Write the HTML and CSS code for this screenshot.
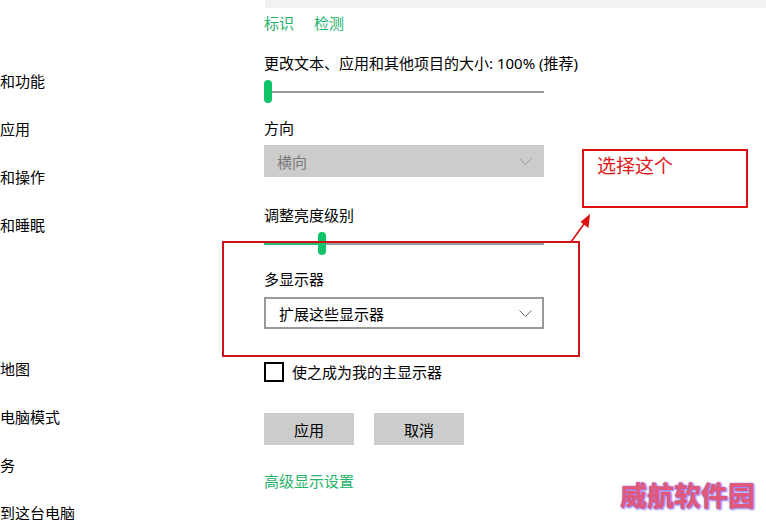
FILE: index.html
```html
<!DOCTYPE html>
<html lang="zh-CN">
<head>
  <meta charset="UTF-8" />
  <title>显示设置</title>
  <meta name="viewport" content="width=device-width, initial-scale=1.0" />
  <link rel="stylesheet" href="styles.css">
</head>
<body>
  <div class="page">
    <ul class="nav">
      <li></li>
      <li>和功能</li>
      <li>应用</li>
      <li>和操作</li>
      <li>和睡眠</li>
      <li></li>
      <li></li>
      <li>地图</li>
      <li>电脑模式</li>
      <li>务</li>
      <li>到这台电脑</li>
    </ul>

    <div class="main">
      <div class="preview"></div>
      <div class="links">
        <a>标识</a>
        <a>检测</a>
      </div>

      <div class="label first">更改文本、应用和其他项目的大小: 100% (推荐)</div>
      <div class="slider">
        <div class="thumb"></div>
        <div class="track"></div>
      </div>

      <div class="label orient">方向</div>
      <div class="select disabled">
        <span>横向</span>
        <svg width="13" height="7" viewBox="0 0 13 7"><polyline points="0.5,0.5 6.5,6.5 12.5,0.5" fill="none" stroke="#9a9a9a" stroke-width="1"/></svg>
      </div>

      <div class="label bright">调整亮度级别</div>
      <div class="slider">
        <div class="track filled"></div>
        <div class="thumb"></div>
        <div class="track"></div>
      </div>

      <div class="label multi">多显示器</div>
      <div class="select">
        <span>扩展这些显示器</span>
        <svg width="13" height="7" viewBox="0 0 13 7"><polyline points="0.5,0.5 6.5,6.5 12.5,0.5" fill="none" stroke="#666" stroke-width="1"/></svg>
      </div>

      <label class="check">
        <span class="box"></span>
        <span>使之成为我的主显示器</span>
      </label>

      <div class="buttons">
        <button>应用</button>
        <button>取消</button>
      </div>

      <a class="advanced">高级显示设置</a>
    </div>
  </div>

  <!-- annotations drawn over the screenshot -->
  <div class="mark mark-select"></div>
  <div class="mark mark-note">选择这个</div>
  <svg class="arrow" width="30" height="34" viewBox="0 0 30 34">
    <line x1="2" y1="31" x2="15" y2="13" stroke="#e01010" stroke-width="1.6"/>
    <polygon points="21,3 19.5,17 11.5,11" fill="#e01010"/>
  </svg>
  <div class="watermark">威航软件园</div>
</body>
</html>
```

FILE: styles.css
```css
html, body { margin: 0; height: 520px; overflow: hidden; background: #fff; }
body { font-family: "Noto Sans", "Noto Sans CJK SC", sans-serif; font-size: 15px; color: #000; }

.page { display: flex; height: 520px; }

.nav { flex: 0 0 264px; list-style: none; margin: 0; padding: 9px 0 0; white-space: nowrap; }
.nav li { height: 48px; line-height: 48px; }

.main { flex: 1; display: flex; flex-direction: column; align-items: flex-start; }
.preview { align-self: stretch; height: 8px; margin-left: 1px; background: #f2f2f2; }

.links { display: flex; gap: 20px; margin-top: 5px; line-height: 20px; }
.links a, .advanced { color: #1fb36b; }

.label { line-height: 20px; }
.label.first { margin-top: 20px; }
.label.orient { margin-top: 15px; }
.label.bright { margin-top: 28px; }
.label.multi { margin-top: 14px; }

.slider { display: flex; align-items: center; width: 280px; height: 23px; margin-top: 7px; }
.slider .track { flex: 1; height: 2px; background: #999; }
.slider .thumb { width: 8px; height: 23px; border-radius: 4px; background: #10c46a; }
.slider .track.filled { flex: 0 0 54px; background: #2bb673; }

.select {
  box-sizing: border-box; width: 280px; height: 32px; margin-top: 7px;
  display: flex; align-items: center; justify-content: space-between;
  padding: 0 10px 0 13px; border: 2px solid #999; background: #fff;
}
.select.disabled { border: none; padding-right: 12px; background: #ccc; color: #7a7a7a; }
.label.multi + .select { margin-top: 8px; }

.check { display: flex; align-items: center; gap: 8px; margin-top: 33px; line-height: 20px; }
.check .box { box-sizing: border-box; width: 20px; height: 20px; border: 2px solid #000; }

.buttons { display: flex; gap: 20px; margin-top: 31px; }
.buttons button {
  width: 90px; height: 32px; border: none; background: #ccc; color: #000;
  font-family: inherit; font-size: 15px; padding: 0;
}

.advanced { margin-top: 26px; line-height: 20px; }

.mark { position: absolute; box-sizing: border-box; border: 2px solid #cc1418; }
.mark-select { left: 222px; top: 241px; width: 358px; height: 116px; }
.mark-note {
  left: 582px; top: 149px; width: 166px; height: 59px; border-color: #e01010;
  padding: 2px 0 0 13px; color: #e01818; font-size: 19px; line-height: 26px;
}
.arrow { position: absolute; left: 569px; top: 211px; }

.watermark {
  position: absolute; left: 620px; top: 477px;
  font-family: "Noto Sans CJK SC", sans-serif; font-size: 27px; font-weight: 900; line-height: 36px;
  color: #e0587a; text-shadow: 0 0 2px #8a7cff, 1px 1px 2px #8a7cff;
}
```
